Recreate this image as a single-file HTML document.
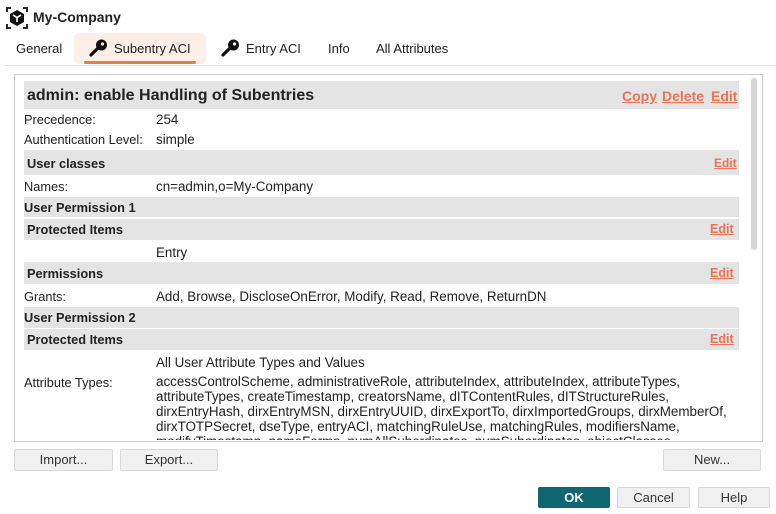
<!DOCTYPE html>
<html><head><style>
*{margin:0;padding:0;box-sizing:border-box}
body{width:776px;height:514px;background:#fff;font-family:"Liberation Sans",sans-serif;font-size:12.8px;color:#222;position:relative;overflow:hidden}
.a{position:absolute;white-space:nowrap}
.v{font-size:13.4px}
.g{position:absolute;left:24px;width:715px;background:#e4e4e4}
.h{position:absolute;left:27px;font-weight:bold;font-size:12.8px}
.l{color:#ef7152;text-decoration:underline;font-weight:bold;position:absolute}
.btn{position:absolute;background:#f0f0f0;border:1px solid #d8d8d8;border-radius:2px;text-align:center;font-size:13px;line-height:20px;color:#333}
</style></head><body>
<svg class="a" style="left:5px;top:6px" width="24" height="24" viewBox="0 0 24 24"><path d="M2 6V2h4M18 2h4v4M22 18v4h-4M6 22H2v-4" stroke="#111" stroke-width="1.8" fill="none"/><path d="M12 4l7 4v8l-7 4-7-4V8z" fill="#111"/><path d="M8 9l4 2.5 4-2.5M12 11.5V16" stroke="#fff" stroke-width="1.6" fill="none"/></svg>
<div class="a" style="left:33px;top:9px;font-weight:bold;font-size:14px">My-Company</div>
<div class="a" style="left:16px;top:41px;font-size:13px">General</div>
<div class="a" style="left:74px;top:33px;width:132px;height:31px;background:#fdeee8;border-radius:5px"></div>
<div class="a" style="left:84px;top:61px;width:112px;height:3px;background:#e8785a;border-radius:2px"></div>
<svg class="a" style="left:89px;top:38px" width="20" height="20" viewBox="0 0 20 20"><circle cx="12.5" cy="7" r="5.5" fill="#111"/><circle cx="13.5" cy="6" r="1.6" fill="#fdeee8"/><path d="M9 10L2 17" stroke="#111" stroke-width="3.2" stroke-linecap="round"/></svg>
<div class="a" style="left:114px;top:41px;font-size:13px">Subentry ACI</div>
<svg class="a" style="left:221px;top:38px" width="20" height="20" viewBox="0 0 20 20"><circle cx="12.5" cy="7" r="5.5" fill="#111"/><circle cx="13.5" cy="6" r="1.6" fill="#fff"/><path d="M9 10L2 17" stroke="#111" stroke-width="3.2" stroke-linecap="round"/></svg>
<div class="a" style="left:246px;top:41px;font-size:13px">Entry ACI</div>
<div class="a" style="left:328px;top:41px;font-size:13px">Info</div>
<div class="a" style="left:376px;top:41px;font-size:13px">All Attributes</div>
<div class="a" style="left:4px;top:65px;width:772px;height:1px;background:#e6e6e6"></div>
<div class="a" style="left:14px;top:74px;width:749px;height:368px;border:1px solid #ccc;overflow:hidden"></div>
<div class="a" style="left:751px;top:78px;width:6px;height:172px;background:#d6d6d6;border-radius:3px"></div>
<div class="g" style="top:81px;height:28px"></div>
<div class="a" style="left:27px;top:87px;font-weight:bold;font-size:16px">admin: enable Handling of Subentries</div>
<span class="l" style="left:622px;top:88px;font-size:14px">Copy</span><span class="l" style="left:662px;top:88px;font-size:14px">Delete</span><span class="l" style="left:711px;top:88px;font-size:14px">Edit</span>
<div class="a" style="left:24px;top:112px">Precedence:</div><div class="a v" style="left:156px;top:112px">254</div>
<div class="a" style="left:24px;top:132px">Authentication Level:</div><div class="a v" style="left:156px;top:132px">simple</div>
<div class="g" style="top:150px;height:25px"></div><div class="h" style="top:156px">User classes</div><span class="l" style="left:714px;top:156px;font-size:12px">Edit</span>
<div class="a" style="left:24px;top:179px">Names:</div><div class="a v" style="left:156px;top:179px">cn=admin,o=My-Company</div>
<div class="g" style="top:197px;height:20px"></div><div class="h" style="left:24px;top:200px">User Permission 1</div>
<div class="g" style="top:219px;height:21px"></div><div class="h" style="top:222px">Protected Items</div><span class="l" style="left:710px;top:222px;font-size:12.5px">Edit</span>
<div class="a v" style="left:156px;top:245px">Entry</div>
<div class="g" style="top:262px;height:22px"></div><div class="h" style="top:266px">Permissions</div><span class="l" style="left:710px;top:266px;font-size:12.5px">Edit</span>
<div class="a" style="left:24px;top:289px">Grants:</div><div class="a v" style="left:156px;top:289px">Add, Browse, DiscloseOnError, Modify, Read, Remove, ReturnDN</div>
<div class="g" style="top:307px;height:21px"></div><div class="h" style="left:24px;top:310px">User Permission 2</div>
<div class="g" style="top:329px;height:21px"></div><div class="h" style="top:332px">Protected Items</div><span class="l" style="left:710px;top:332px;font-size:12.5px">Edit</span>
<div class="a v" style="left:156px;top:355px">All User Attribute Types and Values</div>
<div class="a" style="left:24px;top:375px">Attribute Types:</div>
<div class="a v" style="left:156px;top:374px;line-height:15px;height:66px;overflow:hidden">accessControlScheme, administrativeRole, attributeIndex, attributeIndex, attributeTypes,<br>attributeTypes, createTimestamp, creatorsName, dITContentRules, dITStructureRules,<br>dirxEntryHash, dirxEntryMSN, dirxEntryUUID, dirxExportTo, dirxImportedGroups, dirxMemberOf,<br>dirxTOTPSecret, dseType, entryACI, matchingRuleUse, matchingRules, modifiersName,<br>modifyTimestamp, nameForms, numAllSubordinates, numSubordinates, objectClasses</div>
<div class="btn" style="left:14px;top:449px;width:99px;height:22px">Import...</div>
<div class="btn" style="left:120px;top:449px;width:98px;height:22px">Export...</div>
<div class="btn" style="left:663px;top:449px;width:98px;height:22px">New...</div>
<div class="btn" style="left:538px;top:487px;width:72px;height:21px;background:#0e6670;border-color:#0e6670;color:#fff;font-weight:bold">OK</div>
<div class="btn" style="left:617px;top:487px;width:73px;height:21px">Cancel</div>
<div class="btn" style="left:698px;top:487px;width:72px;height:21px">Help</div>
</body></html>
